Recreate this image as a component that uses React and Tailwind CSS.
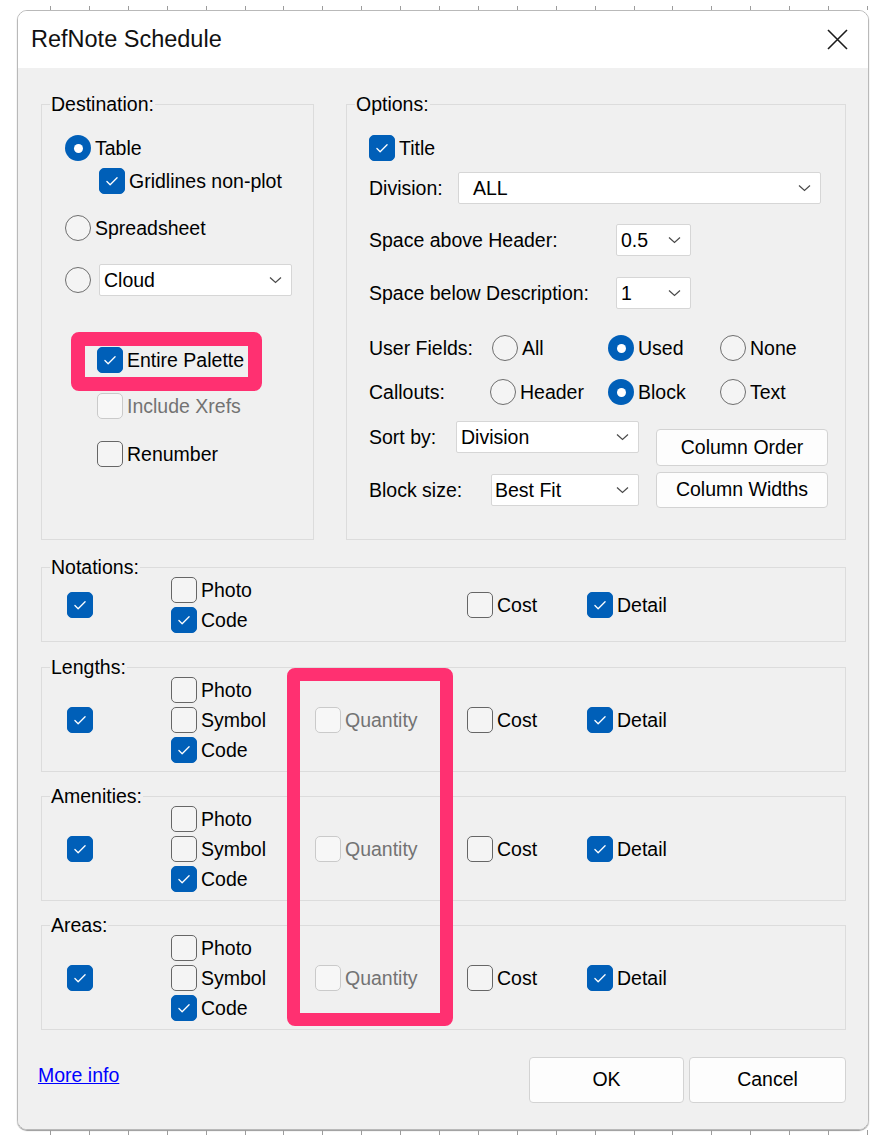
import clsx from "clsx";

const ticks = Array.from({ length: 22 }, (_, i) => Math.round(50 + i * 38.9));

const Ruler = ({ top }) => (
  <svg width="886" height={top ? 10 : 8} className="block">
    {ticks.map((x) => (
      <line key={x} x1={x + 0.5} x2={x + 0.5} y1={top ? 6 : 0} y2={top ? 10 : 5} stroke="#9c9c9c" strokeWidth="1" />
    ))}
  </svg>
);

const Tick = () => (
  <svg width="26" height="26" viewBox="0 0 26 26">
    <path d="M7.5 13.5 L11 17 L18.5 9.5" fill="none" stroke="white" strokeWidth="1.4" strokeLinecap="round" strokeLinejoin="round" />
  </svg>
);

const Check = ({ checked, disabled }) => (
  <span
    className={clsx(
      "flex h-[26px] w-[26px] shrink-0 items-center justify-center rounded-[5px] border",
      checked
        ? "border-[#005fb8] bg-[#005fb8]"
        : disabled
        ? "border-[#cacaca] bg-[#f7f7f7]"
        : "border-[#666666] bg-[#f4f4f4]"
    )}
  >
    {checked && <Tick />}
  </span>
);

const CheckRow = ({ label, checked, disabled }) => (
  <div className="flex items-center gap-[4px]">
    <Check checked={checked} disabled={disabled} />
    <span className={clsx("leading-[26px]", disabled ? "text-[#737373]" : "text-black")}>{label}</span>
  </div>
);

const Radio = ({ checked }) =>
  checked ? (
    <span className="flex h-[26px] w-[26px] shrink-0 items-center justify-center rounded-full bg-[#005fb8]">
      <span className="h-[9px] w-[9px] rounded-full bg-white" />
    </span>
  ) : (
    <span className="h-[26px] w-[26px] shrink-0 rounded-full border border-[#6e6e6e] bg-[#f4f4f4]" />
  );

const RadioRow = ({ label, checked }) => (
  <div className="flex items-center gap-[4px]">
    <Radio checked={checked} />
    <span className="leading-[26px]">{label}</span>
  </div>
);

const Chevron = () => (
  <svg width="13" height="8" viewBox="0 0 13 8">
    <path d="M1 1.5 L6.5 6.5 L12 1.5" fill="none" stroke="#4a4a4a" strokeWidth="1.2" />
  </svg>
);

const Select = ({ value, className }) => (
  <div
    className={clsx(
      "flex h-[32px] items-center justify-between rounded-[2px] border border-[#d6d6d6] bg-white pr-[9px]",
      className
    )}
  >
    <span className="leading-[26px]">{value}</span>
    <Chevron />
  </div>
);

const Button = ({ children, className }) => (
  <button className={clsx("flex items-center justify-center rounded-[4px] border border-[#d3d3d3] bg-[#fdfdfd] text-black", className)}>
    {children}
  </button>
);

const Group = ({ label, className, children }) => (
  <fieldset className={clsx("border border-[#dcdcdc]", className)}>
    <legend className="ml-[8px] px-[1px] leading-[20px]">{label}</legend>
    {children}
  </fieldset>
);

const ItemGroup = ({ label, withSymbol, className }) => (
  <Group label={label} className={className}>
    <div className="flex items-center pb-[8px] pl-[25px]">
      <div className="w-[104px]">
        <Check checked />
      </div>
      <div className="flex w-[144px] flex-col gap-[4px]">
        <CheckRow label="Photo" />
        {withSymbol && <CheckRow label="Symbol" />}
        <CheckRow label="Code" checked />
      </div>
      <div className="w-[152px]">{withSymbol && <CheckRow label="Quantity" disabled />}</div>
      <div className="w-[120px]">
        <CheckRow label="Cost" />
      </div>
      <CheckRow label="Detail" checked />
    </div>
  </Group>
);

export default function App() {
  return (
    <div className="min-h-screen bg-white font-['Liberation_Sans',Arial,sans-serif] text-[19.5px] text-black">
      <Ruler top />
      <div className="ml-[17px] w-[852px] overflow-hidden rounded-[10px] border border-[#b9b9b9] shadow-[0_1px_1px_#9a9a9a]">
        {/* title bar */}
        <div className="flex h-[57px] items-center justify-between bg-white pl-[13px] pr-[20px]">
          <span className="text-[23.5px] text-[#111]">RefNote Schedule</span>
          <svg width="21" height="21" viewBox="0 0 21 21">
            <path d="M1 1 L20 20 M20 1 L1 20" stroke="#1b1b1b" strokeWidth="1.6" />
          </svg>
        </div>

        <div className="bg-[#f0f0f0] pb-[26px] pt-[26px]">
          <div className="px-[23px] pr-[22px]">
            <div className="flex gap-[32px]">
              <Group label="Destination:" className="w-[273px]">
                <div className="pl-[23px] pt-[21px]">
                  <RadioRow label="Table" checked />
                  <div className="ml-[34px] mt-[7px]">
                    <CheckRow label="Gridlines non-plot" checked />
                  </div>
                  <div className="mt-[21px]">
                    <RadioRow label="Spreadsheet" />
                  </div>
                  <div className="mt-[23px] flex items-center gap-[8px]">
                    <Radio />
                    <Select value="Cloud" className="w-[193px] pl-[4px]" />
                  </div>
                  <div className="relative ml-[32px] mt-[51px] w-fit">
                    <div className="absolute left-[-26px] top-[-15px] h-[59px] w-[191px] rounded-[8px] border-[14px] border-[#ff3071]" />
                    <CheckRow label="Entire Palette" checked />
                  </div>
                  <div className="ml-[32px] mt-[20px]">
                    <CheckRow label="Include Xrefs" disabled />
                  </div>
                  <div className="ml-[32px] mt-[22px]">
                    <CheckRow label="Renumber" />
                  </div>
                </div>
              </Group>

              <Group label="Options:" className="w-[500px]">
                <div className="pb-[31px] pl-[22px] pt-[21px]">
                  <CheckRow label="Title" checked />
                  <div className="mt-[11px] flex items-center">
                    <span className="w-[89px] leading-[26px]">Division:</span>
                    <Select value="ALL" className="w-[363px] pl-[14px]" />
                  </div>
                  <div className="mt-[20px] flex items-center">
                    <span className="w-[247px] leading-[26px]">Space above Header:</span>
                    <Select value="0.5" className="w-[75px] pl-[4px]" />
                  </div>
                  <div className="mt-[21px] flex items-center">
                    <span className="w-[247px] leading-[26px]">Space below Description:</span>
                    <Select value="1" className="w-[75px] pl-[4px]" />
                  </div>
                  <div className="mt-[26px] flex items-center">
                    <span className="w-[123px] leading-[26px]">User Fields:</span>
                    <div className="w-[116px]">
                      <RadioRow label="All" />
                    </div>
                    <div className="w-[112px]">
                      <RadioRow label="Used" checked />
                    </div>
                    <RadioRow label="None" />
                  </div>
                  <div className="mt-[18px] flex items-center">
                    <span className="w-[121px] leading-[26px]">Callouts:</span>
                    <div className="w-[118px]">
                      <RadioRow label="Header" />
                    </div>
                    <div className="w-[112px]">
                      <RadioRow label="Block" checked />
                    </div>
                    <RadioRow label="Text" />
                  </div>
                  <div className="mt-[16px] flex">
                    <div className="flex flex-col gap-[21px]">
                      <div className="flex items-center">
                        <span className="w-[87px] leading-[26px]">Sort by:</span>
                        <Select value="Division" className="w-[183px] pl-[4px]" />
                      </div>
                      <div className="flex items-center">
                        <span className="w-[122px] leading-[26px]">Block size:</span>
                        <Select value="Best Fit" className="w-[148px] pl-[3px]" />
                      </div>
                    </div>
                    <div className="ml-[17px] mt-[8px] flex flex-col gap-[6px]">
                      <Button className="h-[37px] w-[172px]">Column Order</Button>
                      <Button className="h-[36px] w-[172px]">Column Widths</Button>
                    </div>
                  </div>
                </div>
              </Group>
            </div>

            <ItemGroup label="Notations:" className="mt-[17px]" />
            <div className="relative">
              <div className="absolute left-[246px] top-[11px] z-10 h-[358px] w-[166px] rounded-[8px] border-[13px] border-[#ff3071]" />
              <ItemGroup label="Lengths:" withSymbol className="mt-[15px]" />
              <ItemGroup label="Amenities:" withSymbol className="mt-[14px]" />
              <ItemGroup label="Areas:" withSymbol className="mt-[14px]" />
            </div>
          </div>

          <div className="mt-[27px] flex items-start justify-between pl-[20px] pr-[22px]">
            <a className="mt-[8px] leading-[20px] text-[#0000ff] underline">More info</a>
            <div className="flex gap-[5px]">
              <Button className="h-[46px] w-[155px]">OK</Button>
              <Button className="h-[46px] w-[157px]">Cancel</Button>
            </div>
          </div>
        </div>
      </div>
      <Ruler />
    </div>
  );
}
